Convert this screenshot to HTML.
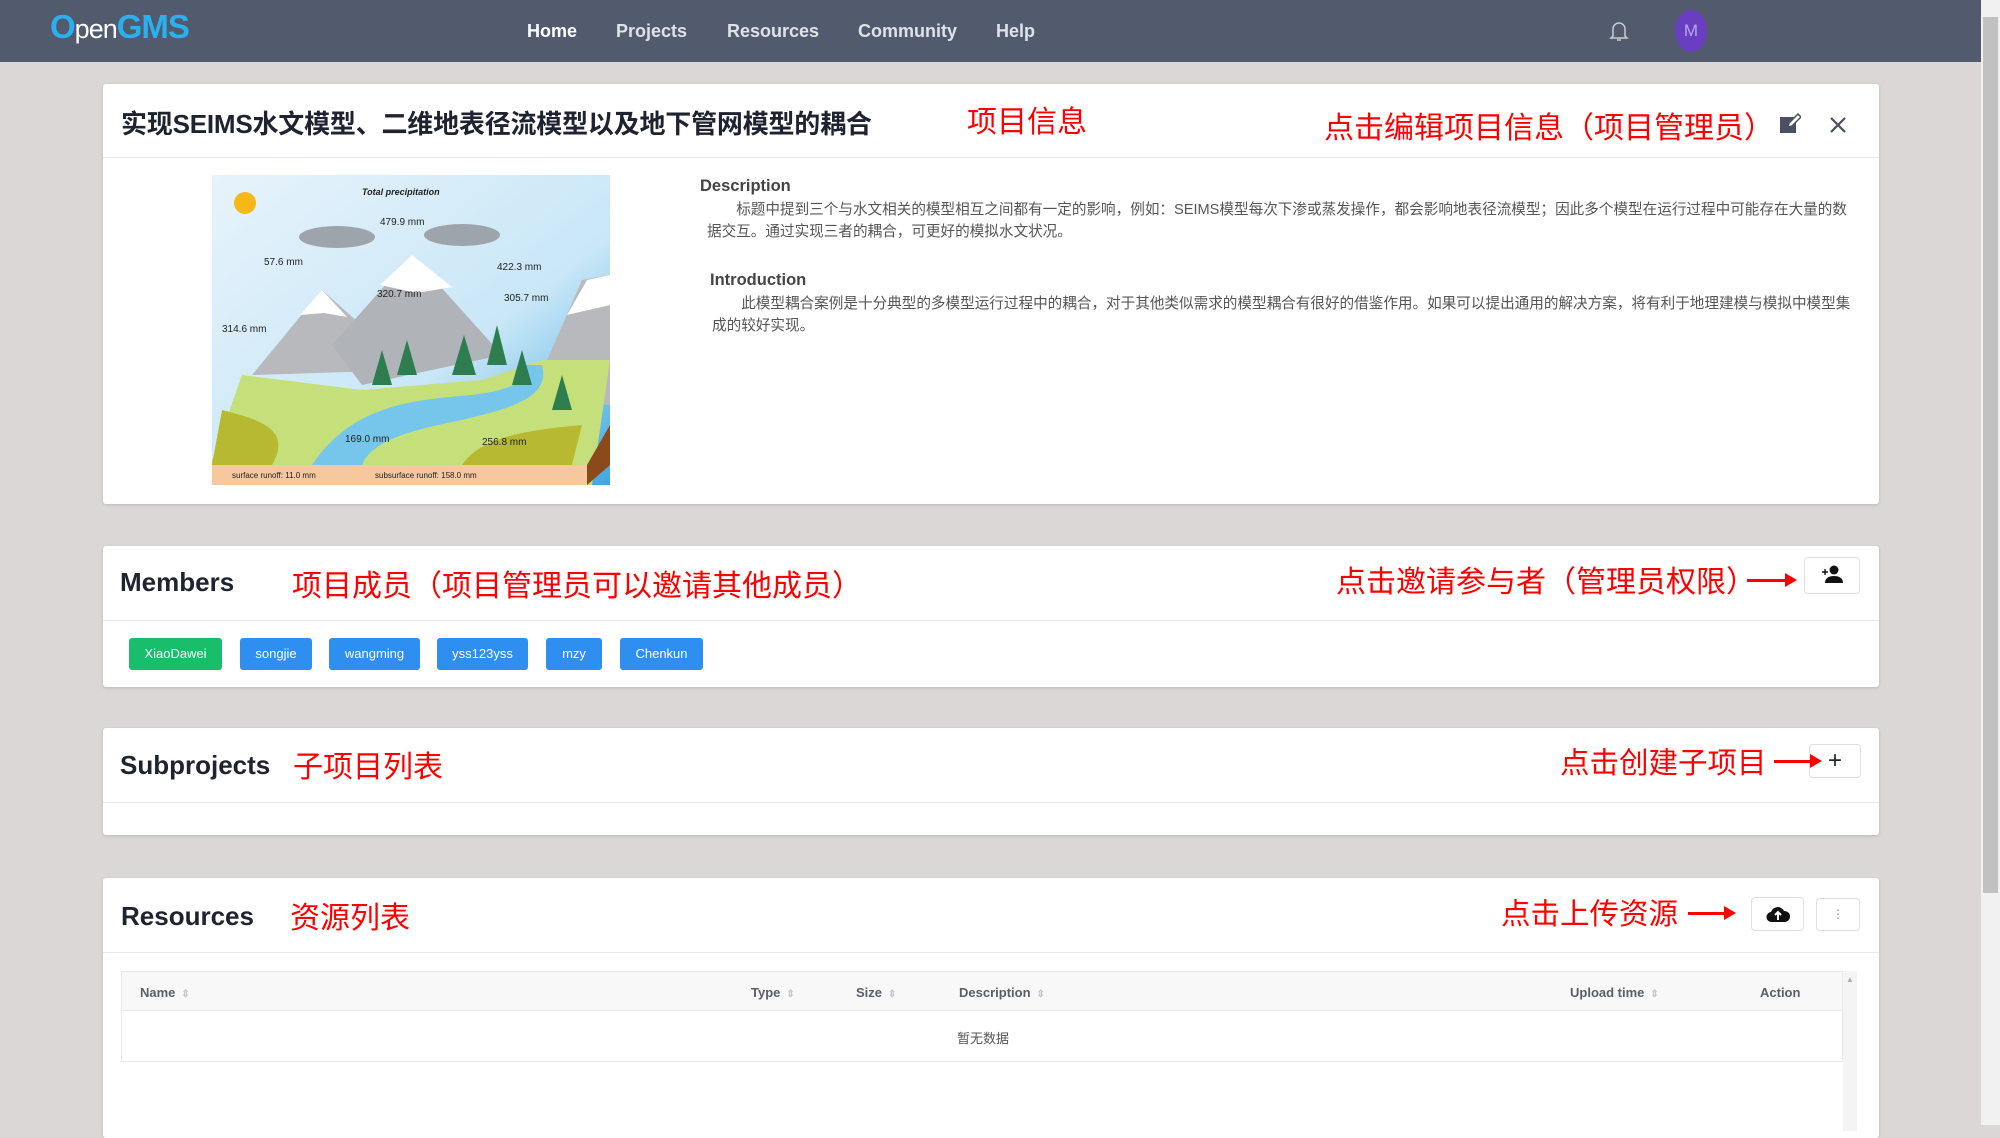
<!DOCTYPE html>
<html><head><meta charset="utf-8">
<style>
*{margin:0;padding:0;box-sizing:border-box}
body{width:2000px;height:1125px;overflow:hidden;background:#dcd7d7;font-family:"Liberation Sans","Noto Sans CJK SC",sans-serif;position:relative}
.a{position:absolute}
.nav{left:0;top:0;width:1981px;height:62px;background:#525a6e}
.nav .it{top:21px;font-size:18px;font-weight:bold;color:#dfe2e8}
.card{background:#fff;border-radius:3px;box-shadow:0 1px 3px rgba(0,0,0,.15)}
.hr{height:1px;background:#e8e8e8}
.red{color:#f00;font-size:30px;white-space:nowrap;font-family:"Liberation Sans","Noto Sans CJK SC",sans-serif}
.h{font-size:26px;font-weight:bold;color:#1f2330}
.btn{background:#fff;border:1px solid #dcdfe6;border-radius:4px}
.mb{top:638px;height:32px;color:#fff;font-size:13px;border-radius:3px;text-align:center;line-height:32px;background:#2e8ff0}
.arrow{height:3px;background:#f00;z-index:5}
.arrow:after{content:"";position:absolute;right:-8px;top:-6px;border-left:12px solid #f00;border-top:7px solid transparent;border-bottom:7px solid transparent}
.th{top:985px;font-size:13px;font-weight:bold;color:#5a5e66}
.th i{font-style:normal;color:#c0c4cc;font-size:10px;margin-left:6px}
.p{font-size:14.6px;color:#555;white-space:nowrap;line-height:22px}
</style></head><body>
<div class="a nav">
 <div class="a" style="left:50px;top:8px;font-size:33px;font-weight:bold;color:#2ab0ee;letter-spacing:-1px">O<span style="color:#fff;font-size:27px;font-weight:normal">pen</span>GMS</div>
 <div class="a it" style="left:527px;color:#fff">Home</div>
 <div class="a it" style="left:616px">Projects</div>
 <div class="a it" style="left:727px">Resources</div>
 <div class="a it" style="left:858px">Community</div>
 <div class="a it" style="left:996px">Help</div>
 <svg class="a" style="left:1609px;top:19px" width="20" height="24" viewBox="0 0 20 24"><path d="M4 17V10a6 6 0 0 1 12 0v7l2 2H2z M8 21h4" fill="none" stroke="#ccc" stroke-width="1.5"/></svg>
 <div class="a" style="left:1675px;top:10px;width:32px;height:42px;border-radius:50%;background:#6a3ec0;color:#b9a6ee;font-size:17px;text-align:center;line-height:42px">M</div>
</div>
<div class="a" style="left:1981px;top:0;width:19px;height:1125px;background:#f1f1f1"></div>
<div class="a" style="left:1983px;top:17px;width:15px;height:876px;background:#c1c1c1"></div>

<!-- card 1 -->
<div class="a card" style="left:103px;top:84px;width:1776px;height:420px"></div>
<div class="a hr" style="left:103px;top:157px;width:1776px"></div>
<div class="a" style="left:121px;top:104px;font-size:26px;font-weight:bold;color:#1f2330;white-space:nowrap;letter-spacing:-0.2px">实现SEIMS水文模型、二维地表径流模型以及地下管网模型的耦合</div>
<div class="a red" style="left:967px;top:97px">项目信息</div>
<div class="a red" style="left:1324px;top:103px">点击编辑项目信息（项目管理员）</div>
<svg class="a" style="left:1779px;top:113px" width="22" height="22" viewBox="0 0 22 22"><rect x="1" y="4" width="16" height="16" fill="#4a5062"/><path d="M9 14l1-4 9-9 3 3-9 9z" fill="#fff" stroke="#4a5062" stroke-width="1.5"/></svg>
<svg class="a" style="left:1828px;top:115px" width="20" height="20" viewBox="0 0 20 20"><path d="M3 3L17 17M17 3L3 17" stroke="#4a5062" stroke-width="2.2"/></svg>
<svg class="a" style="left:212px;top:175px" width="398" height="310" viewBox="0 0 398 310">
 <defs><linearGradient id="sky" x1="0" y1="0" x2="1" y2="1"><stop offset="0" stop-color="#e7f3fb"/><stop offset="0.6" stop-color="#c9e7f7"/><stop offset="1" stop-color="#3fa8e0"/></linearGradient></defs>
 <rect width="398" height="310" fill="url(#sky)"/>
 <polygon points="40,200 110,115 200,195" fill="#b7b9bd"/>
 <polygon points="88,140 110,115 135,142 112,138" fill="#fff"/>
 <polygon points="120,170 200,80 290,180 150,210" fill="#b0b3b8"/>
 <polygon points="168,110 200,80 240,112 205,118" fill="#fff"/>
 <polygon points="320,220 370,105 398,100 398,230" fill="#b7b9bd"/>
 <polygon points="355,140 375,105 398,100 398,130" fill="#fff"/>
 <polygon points="0,285 30,200 150,215 270,205 330,185 398,185 380,310 0,310" fill="#c5e07a"/>
 <path d="M100,290 C140,230 200,225 260,220 C300,215 320,205 310,190 L330,190 C340,225 290,235 250,245 C200,255 160,265 150,290z" fill="#75c6ea"/>
 <path d="M0,290 L10,235 C50,245 80,255 60,290z" fill="#b7ba30"/>
 <path d="M250,290 C270,260 320,255 370,250 L360,290z" fill="#b7ba30"/>
 <rect x="0" y="290" width="375" height="20" fill="#f5c99d"/>
 <polygon points="375,290 398,250 398,290 375,310" fill="#8a4a1a"/>
 <circle cx="33" cy="28" r="11" fill="#f6b816"/>
 <g fill="#2e7d4f"><polygon points="160,210 170,175 180,210"/><polygon points="185,200 195,165 205,200"/><polygon points="240,200 252,160 264,200"/><polygon points="275,190 285,150 295,190"/><polygon points="300,210 310,175 320,210"/><polygon points="340,235 350,200 360,235"/></g>
 <ellipse cx="125" cy="62" rx="38" ry="11" fill="#9ea4ab"/><ellipse cx="250" cy="60" rx="38" ry="11" fill="#9ea4ab"/>
 <g font-family="Liberation Sans" font-size="10" fill="#222">
  <text x="150" y="20" font-style="italic" font-weight="bold" font-size="9">Total precipitation</text>
  <text x="168" y="50">479.9 mm</text><text x="52" y="90">57.6 mm</text><text x="285" y="95">422.3 mm</text>
  <text x="165" y="122">320.7 mm</text><text x="292" y="126">305.7 mm</text><text x="10" y="157">314.6 mm</text>
  <text x="133" y="267">169.0 mm</text><text x="270" y="270">256.8 mm</text>
  <text x="20" y="303" font-size="8">surface runoff: 11.0 mm</text><text x="163" y="303" font-size="8">subsurface runoff: 158.0 mm</text>
 </g>
</svg>
<div class="a" style="left:700px;top:177px;font-size:16.5px;font-weight:bold;color:#444">Description</div>
<div class="a p" style="left:707px;top:199px">　　标题中提到三个与水文相关的模型相互之间都有一定的影响，例如：SEIMS模型每次下渗或蒸发操作，都会影响地表径流模型；因此多个模型在运行过程中可能存在大量的数<br>据交互。通过实现三者的耦合，可更好的模拟水文状况。</div>
<div class="a" style="left:710px;top:271px;font-size:16.5px;font-weight:bold;color:#444">Introduction</div>
<div class="a p" style="left:712px;top:293px">　　此模型耦合案例是十分典型的多模型运行过程中的耦合，对于其他类似需求的模型耦合有很好的借鉴作用。如果可以提出通用的解决方案，将有利于地理建模与模拟中模型集<br>成的较好实现。</div>

<!-- members -->
<div class="a card" style="left:103px;top:546px;width:1776px;height:141px"></div>
<div class="a hr" style="left:103px;top:620px;width:1776px"></div>
<div class="a h" style="left:120px;top:567px">Members</div>
<div class="a red" style="left:292px;top:561px">项目成员（项目管理员可以邀请其他成员）</div>
<div class="a red" style="left:1336px;top:557px">点击邀请参与者（管理员权限）</div>
<div class="a btn" style="left:1804px;top:557px;width:56px;height:37px"></div>
<div class="a arrow" style="left:1747px;top:579px;width:42px"></div>
<svg class="a" style="left:1820px;top:565px" width="24" height="20" viewBox="0 0 24 20"><circle cx="14" cy="5" r="4.5" fill="#111"/><path d="M5 18c0-5 4-7 9-7s9 2 9 7z" fill="#111"/><path d="M2 7h6M5 4v6" stroke="#111" stroke-width="1.4"/></svg>
<div class="a mb" style="left:129px;width:93px;background:#19be6b">XiaoDawei</div>
<div class="a mb" style="left:240px;width:72px">songjie</div>
<div class="a mb" style="left:329px;width:91px">wangming</div>
<div class="a mb" style="left:437px;width:91px">yss123yss</div>
<div class="a mb" style="left:546px;width:56px">mzy</div>
<div class="a mb" style="left:620px;width:83px">Chenkun</div>

<!-- subprojects -->
<div class="a card" style="left:103px;top:728px;width:1776px;height:107px"></div>
<div class="a hr" style="left:103px;top:802px;width:1776px"></div>
<div class="a h" style="left:120px;top:750px">Subprojects</div>
<div class="a red" style="left:293px;top:742px">子项目列表</div>
<div class="a btn" style="left:1809px;top:744px;width:52px;height:34px;text-align:center;font-size:24px;line-height:31px;color:#1f2330">+</div>
<div class="a red" style="left:1560px;top:740px;font-size:29.5px">点击创建子项目</div>
<div class="a arrow" style="left:1774px;top:760px;width:40px"></div>

<!-- resources -->
<div class="a card" style="left:103px;top:878px;width:1776px;height:260px"></div>
<div class="a hr" style="left:103px;top:952px;width:1776px"></div>
<div class="a h" style="left:121px;top:901px">Resources</div>
<div class="a red" style="left:290px;top:893px">资源列表</div>
<div class="a red" style="left:1501px;top:891px;font-size:29.5px">点击上传资源</div>
<div class="a arrow" style="left:1688px;top:912px;width:40px"></div>
<div class="a btn" style="left:1751px;top:897px;width:53px;height:34px"></div>
<svg class="a" style="left:1766px;top:905px" width="24" height="18" viewBox="0 0 24 18"><path d="M6 17a5 5 0 0 1-1-10 7 7 0 0 1 13-1 5.5 5.5 0 0 1 1 11z" fill="#111"/><path d="M12 15V8M9 10l3-3 3 3" stroke="#fff" stroke-width="2" fill="none"/></svg>
<div class="a btn" style="left:1816px;top:898px;width:44px;height:33px;text-align:center;color:#888;font-size:12px;line-height:30px">⋮</div>
<div class="a" style="left:121px;top:971px;width:1722px;height:91px;border:1px solid #e8eaec"></div>
<div class="a" style="left:122px;top:972px;width:1720px;height:39px;background:#f8f8f9;border-bottom:1px solid #e8eaec"></div>
<div class="a" style="left:1843px;top:971px;width:14px;height:160px;background:#f4f4f4"></div>
<div class="a" style="left:1846px;top:975px;font-size:8px;color:#aaa">▲</div>
<div class="a th" style="left:140px">Name<i>⇕</i></div>
<div class="a th" style="left:751px">Type<i>⇕</i></div>
<div class="a th" style="left:856px">Size<i>⇕</i></div>
<div class="a th" style="left:959px">Description<i>⇕</i></div>
<div class="a th" style="left:1570px">Upload time<i>⇕</i></div>
<div class="a th" style="left:1760px">Action</div>
<div class="a" style="left:957px;top:1028px;font-size:13px;color:#555">暂无数据</div>
</body></html>
